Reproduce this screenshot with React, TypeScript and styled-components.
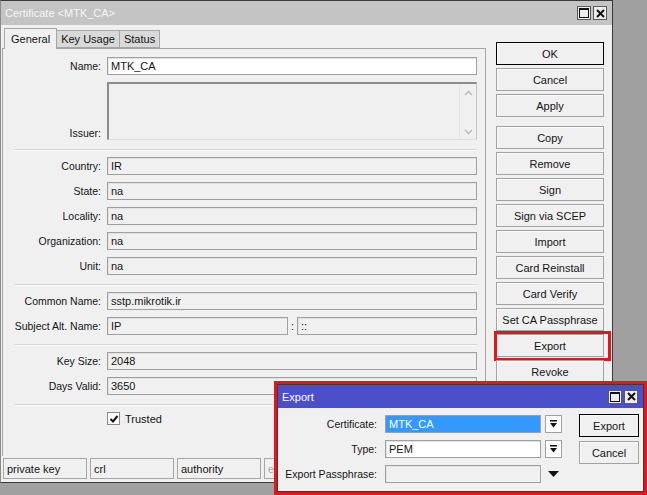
import React from 'react';
import styled, { createGlobalStyle } from 'styled-components';

const GlobalStyle = createGlobalStyle`
  html, body {
    margin: 0;
    padding: 0;
    background: #a0a0a0;
  }
  * {
    box-sizing: border-box;
  }
  body {
    font-family: 'Liberation Sans', Arial, sans-serif;
    font-size: 10.5px;
    color: #141414;
  }
`;

const Desktop = styled.div`
  position: relative;
  width: 647px;
  height: 495px;
  background: #a0a0a0;
  overflow: hidden;
`;

const Window = styled.div`
  width: 613px;
  height: 483px;
  background: #f0f0f0;
  border: 1px solid #3a3a3a;
  border-left-color: #8a8a8a;
  display: flex;
  flex-direction: column;
`;

const TitleBar = styled.div<{ $active?: boolean }>`
  height: ${(p) => (p.$active ? '23px' : '24px')};
  flex: none;
  display: flex;
  align-items: center;
  justify-content: space-between;
  padding: 0 5px 0 4px;
  background: ${(p) => (p.$active ? '#4b4fca' : '#c4c4c4')};
  color: ${(p) => (p.$active ? '#ffffff' : '#f6f6f6')};
`;

const TitleText = styled.span`
  font-size: 11px;
`;

const TitleControls = styled.div`
  display: flex;
  gap: 2px;
`;

const TitleButton = styled.div`
  width: 14px;
  height: 14px;
  background: #ececec;
  border: 1px solid #5a5a5a;
  display: flex;
  align-items: center;
  justify-content: center;
`;

const Content = styled.div`
  flex: 1;
  display: flex;
  min-height: 0;
`;

const LeftPane = styled.div`
  width: 485px;
  display: flex;
  flex-direction: column;
  padding-top: 3px;
  padding-left: 1px;
`;

const TabStrip = styled.div`
  display: flex;
  height: 20px;
  align-items: flex-end;
  padding-left: 2px;
  position: relative;
  z-index: 1;
`;

const Tab = styled.div<{ $selected?: boolean }>`
  height: ${(p) => (p.$selected ? '21px' : '18px')};
  margin-bottom: ${(p) => (p.$selected ? '-1px' : '0')};
  padding: 0 ${(p) => (p.$selected ? '6px' : '4px')};
  display: flex;
  align-items: center;
  font-size: 11px;
  background: ${(p) => (p.$selected ? '#f0f0f0' : '#d9d9d9')};
  border: 1px solid #a6a6a6;
  border-bottom: ${(p) => (p.$selected ? 'none' : '1px solid #a6a6a6')};
  margin-right: -1px;
  z-index: ${(p) => (p.$selected ? 1 : 0)};
`;

const Panel = styled.div`
  flex: 1;
  display: flex;
  flex-direction: column;
  border: 1px solid #a6a6a6;
  border-bottom: none;
  padding: 8px 8px 0 0;
`;

const Row = styled.div<{ $tall?: boolean }>`
  display: flex;
  flex: none;
  align-items: ${(p) => (p.$tall ? 'flex-end' : 'center')};
  height: ${(p) => (p.$tall ? '58px' : '18px')};
  margin-bottom: 7px;
`;

const Label = styled.div`
  width: 99px;
  flex: none;
  text-align: right;
  padding-right: 1px;
  margin-right: 5px;
  white-space: nowrap;
  line-height: 13px;
  font-size: 10.5px;
`;

const Field = styled.div<{ $editable?: boolean; $selected?: boolean; $width?: number }>`
  flex: ${(p) => (p.$width ? 'none' : '1')};
  width: ${(p) => (p.$width ? `${p.$width}px` : 'auto')};
  height: 18px;
  display: flex;
  align-items: center;
  padding-left: 3px;
  font-size: 11px;
  white-space: nowrap;
  overflow: hidden;
  background: ${(p) => (p.$selected ? '#3399ff' : p.$editable ? '#ffffff' : '#f0f0f0')};
  color: ${(p) => (p.$selected ? '#ffffff' : '#141414')};
  border: 1px solid #a0a0a0;
  box-shadow: inset 1px 1px 0 ${(p) => (p.$selected ? '#3399ff' : '#e2e2e2')};
`;

const IssuerBox = styled.div`
  flex: 1;
  height: 58px;
  display: flex;
  justify-content: flex-end;
  background: #f0f0f0;
  border-top: 2px solid #8c8c8c;
  border-left: 2px solid #8c8c8c;
  border-right: 1px solid #c6c6c6;
  border-bottom: 1px solid #dcdcdc;
`;

const ScrollTrack = styled.div`
  width: 17px;
  border-left: 1px solid #e4e4e4;
  display: flex;
  flex-direction: column;
  justify-content: space-between;
  align-items: center;
  padding: 6px 0 4px;
`;

const Separator = styled.div`
  flex: none;
  height: 2px;
  background: #d6d6d6;
  border-bottom: 1px solid #fafafa;
  margin: 2px 0 6px 11px;
`;

const ColonSep = styled.span`
  width: 9px;
  flex: none;
  text-align: center;
`;

const CheckRow = styled.div`
  display: flex;
  align-items: center;
  gap: 5px;
  height: 13px;
  margin-left: 104px;
  font-size: 11px;
`;

const CheckBox = styled.div`
  width: 13px;
  height: 13px;
  background: #ffffff;
  border: 1px solid #8a8a8a;
  display: flex;
  align-items: center;
  justify-content: center;
`;

const ButtonColumn = styled.div`
  width: 108px;
  margin-left: 10px;
  padding-top: 17px;
  display: flex;
  flex-direction: column;
  gap: 3px;
`;

const ButtonGap = styled.div`
  height: 3px;
`;

const ActionButton = styled.div<{ $default?: boolean; $marked?: boolean; $width?: number }>`
  position: relative;
  width: ${(p) => (p.$width ? `${p.$width}px` : '100%')};
  height: 23px;
  flex: none;
  display: flex;
  align-items: center;
  justify-content: center;
  font-size: 11px;
  background: #f0f0f0;
  border: 1px solid ${(p) => (p.$default ? '#000000' : '#a2a2a2')};
  box-shadow: inset 1px 1px 0 #fbfbfb;
  white-space: nowrap;

  ${(p) =>
    p.$marked &&
    `
    &::after {
      content: '';
      position: absolute;
      left: -3px;
      top: -4px;
      right: -8px;
      bottom: -5px;
      border: 3px solid #e8141c;
    }
  `}
`;

const StatusBar = styled.div`
  height: 26px;
  flex: none;
  display: flex;
  gap: 3px;
  padding: 2px 2px 3px 2px;
`;

const StatusCell = styled.div<{ $muted?: boolean }>`
  width: 84px;
  flex: none;
  display: flex;
  align-items: center;
  padding-left: 3px;
  font-size: 11px;
  border: 1px solid #a6a6a6;
  color: ${(p) => (p.$muted ? '#a8a8a8' : '#141414')};
`;

/* export dialog floating over the certificate window */
const Highlight = styled.div`
  position: absolute;
  left: 274px;
  top: 381px;
  width: 373px;
  height: 114px;
  border: 3px solid #e8141c;
`;

const Dialog = styled.div`
  width: 100%;
  height: 100%;
  background: #f0f0f0;
  border: 1px solid #3a3a3a;
  display: flex;
  flex-direction: column;
`;

const DialogBody = styled.div`
  flex: 1;
  display: flex;
  padding: 6px 4px 0 0;
`;

const DialogFields = styled.div`
  display: flex;
  flex-direction: column;
  padding-top: 1px;
`;

const DialogRow = styled.div`
  display: flex;
  align-items: center;
  height: 18px;
  margin-bottom: 7px;
`;

const DialogLabel = styled(Label)`
  width: 100px;
  margin-right: 7px;
`;

const DropButton = styled.div<{ $plain?: boolean }>`
  width: 17px;
  height: 18px;
  margin-left: 4px;
  display: flex;
  align-items: center;
  justify-content: center;
  background: ${(p) => (p.$plain ? 'transparent' : '#ffffff')};
  border: 1px solid ${(p) => (p.$plain ? 'transparent' : '#a0a0a0')};
`;

const DialogButtons = styled.div`
  margin-left: auto;
  display: flex;
  flex-direction: column;
  gap: 4px;
`;

const MaxIcon = () => (
  <svg width="10" height="10" viewBox="0 0 10 10">
    <rect x="0.5" y="0.5" width="9" height="9" fill="none" stroke="#111" />
    <rect x="0" y="0" width="10" height="2" fill="#111" />
  </svg>
);

const CloseIcon = () => (
  <svg width="9" height="9" viewBox="0 0 9 9">
    <path d="M1 1 L8 8 M8 1 L1 8" stroke="#111" strokeWidth="2" />
  </svg>
);

const Chevron = ({ up }: { up?: boolean }) => (
  <svg width="9" height="6" viewBox="0 0 9 6">
    <path d={up ? 'M1 5 L4.5 1.5 L8 5' : 'M1 1 L4.5 4.5 L8 1'} fill="none" stroke="#bdbdbd" strokeWidth="1.6" />
  </svg>
);

const DropIcon = () => (
  <svg width="9" height="8" viewBox="0 0 9 8">
    <rect x="1" y="0" width="7" height="1.5" fill="#111" />
    <path d="M1 3 L8 3 L4.5 7.5 Z" fill="#111" />
  </svg>
);

const TriangleIcon = () => (
  <svg width="11" height="6" viewBox="0 0 11 6">
    <path d="M0 0 L11 0 L5.5 6 Z" fill="#111" />
  </svg>
);

const CheckMark = () => (
  <svg width="10" height="10" viewBox="0 0 10 10">
    <path d="M1.5 5 L4 7.5 L8.5 2" fill="none" stroke="#111" strokeWidth="2" />
  </svg>
);

const subjectFields = [
  { label: 'Country:', value: 'IR' },
  { label: 'State:', value: 'na' },
  { label: 'Locality:', value: 'na' },
  { label: 'Organization:', value: 'na' },
  { label: 'Unit:', value: 'na' },
];

const topButtons = ['Cancel', 'Apply'];
const actionButtons = [
  'Copy',
  'Remove',
  'Sign',
  'Sign via SCEP',
  'Import',
  'Card Reinstall',
  'Card Verify',
  'Set CA Passphrase',
];

const statusCells = ['private key', 'crl', 'authority', 'expired'];

const App: React.FC = () => {
  return (
    <>
      <GlobalStyle />
      <Desktop>
        <Window>
          <TitleBar>
            <TitleText>Certificate &lt;MTK_CA&gt;</TitleText>
            <TitleControls>
              <TitleButton>
                <MaxIcon />
              </TitleButton>
              <TitleButton>
                <CloseIcon />
              </TitleButton>
            </TitleControls>
          </TitleBar>

          <Content>
            <LeftPane>
              <TabStrip>
                <Tab $selected>General</Tab>
                <Tab>Key Usage</Tab>
                <Tab>Status</Tab>
              </TabStrip>
              <Panel>
                <Row>
                  <Label>Name:</Label>
                  <Field $editable>MTK_CA</Field>
                </Row>
                <Row $tall>
                  <Label>Issuer:</Label>
                  <IssuerBox>
                    <ScrollTrack>
                      <Chevron up />
                      <Chevron />
                    </ScrollTrack>
                  </IssuerBox>
                </Row>
                <Separator />
                {subjectFields.map((f) => (
                  <Row key={f.label}>
                    <Label>{f.label}</Label>
                    <Field>{f.value}</Field>
                  </Row>
                ))}
                <Separator />
                <Row>
                  <Label>Common Name:</Label>
                  <Field>sstp.mikrotik.ir</Field>
                </Row>
                <Row>
                  <Label>Subject Alt. Name:</Label>
                  <Field $width={181}>IP</Field>
                  <ColonSep>:</ColonSep>
                  <Field>::</Field>
                </Row>
                <Separator />
                <Row>
                  <Label>Key Size:</Label>
                  <Field>2048</Field>
                </Row>
                <Row>
                  <Label>Days Valid:</Label>
                  <Field>3650</Field>
                </Row>
                <Separator />
                <CheckRow>
                  <CheckBox>
                    <CheckMark />
                  </CheckBox>
                  Trusted
                </CheckRow>
              </Panel>
            </LeftPane>

            <ButtonColumn>
              <ActionButton $default>OK</ActionButton>
              {topButtons.map((b) => (
                <ActionButton key={b}>{b}</ActionButton>
              ))}
              <ButtonGap />
              {actionButtons.map((b) => (
                <ActionButton key={b}>{b}</ActionButton>
              ))}
              <ActionButton $marked>Export</ActionButton>
              <ActionButton>Revoke</ActionButton>
            </ButtonColumn>
          </Content>

          <StatusBar>
            {statusCells.map((c, i) => (
              <StatusCell key={c} $muted={i > 2}>
                {c}
              </StatusCell>
            ))}
          </StatusBar>
        </Window>

        <Highlight>
          <Dialog>
            <TitleBar $active>
              <TitleText>Export</TitleText>
              <TitleControls>
                <TitleButton>
                  <MaxIcon />
                </TitleButton>
                <TitleButton>
                  <CloseIcon />
                </TitleButton>
              </TitleControls>
            </TitleBar>
            <DialogBody>
              <DialogFields>
                <DialogRow>
                  <DialogLabel>Certificate:</DialogLabel>
                  <Field $selected $width={156}>
                    MTK_CA
                  </Field>
                  <DropButton>
                    <DropIcon />
                  </DropButton>
                </DialogRow>
                <DialogRow>
                  <DialogLabel>Type:</DialogLabel>
                  <Field $editable $width={156}>
                    PEM
                  </Field>
                  <DropButton>
                    <DropIcon />
                  </DropButton>
                </DialogRow>
                <DialogRow>
                  <DialogLabel>Export Passphrase:</DialogLabel>
                  <Field $width={156} />
                  <DropButton $plain>
                    <TriangleIcon />
                  </DropButton>
                </DialogRow>
              </DialogFields>
              <DialogButtons>
                <ActionButton $default $width={60}>
                  Export
                </ActionButton>
                <ActionButton $width={60}>Cancel</ActionButton>
              </DialogButtons>
            </DialogBody>
          </Dialog>
        </Highlight>
      </Desktop>
    </>
  );
};

export default App;
